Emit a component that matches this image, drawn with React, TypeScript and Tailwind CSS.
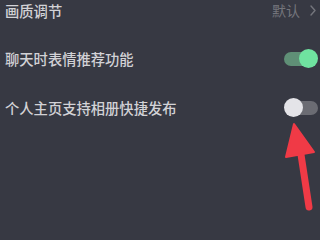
import React from 'react';

type Row = {
  label: string;
  value?: string;
  toggle?: boolean;
};

const ROWS: Row[] = [
  { label: '画质调节', value: '默认' },
  { label: '聊天时表情推荐功能', toggle: true },
  { label: '个人主页支持相册快捷发布', toggle: false },
];

function Toggle({ on }: { on: boolean }) {
  return (
    <div className="relative h-[19px] w-[34px]">
      <div
        className={[
          'absolute top-[3px] h-[14px] rounded-full',
          on ? 'left-0 w-[30px] bg-[#5f8f76]' : 'left-[6px] w-[28px] bg-[#6b6c73]',
        ].join(' ')}
      />
      <div
        className={[
          'absolute top-0 h-[19px] w-[19px] rounded-full',
          on ? 'left-[15px] bg-[#6fe3a0]' : 'left-0 bg-[#e4e4e8]',
        ].join(' ')}
      />
    </div>
  );
}

export default function App() {
  return (
    <div
      className="relative h-[240px] w-[320px] overflow-hidden bg-[#373943]"
      style={{ fontFamily: '"Noto Sans CJK SC", "Noto Sans", sans-serif' }}
    >
      <div className="-mt-[14px] flex flex-col">
        {ROWS.map((row) => (
          <div key={row.label} className="flex h-[48.5px] items-center justify-between pl-[5px] pr-[2px]">
            <span className="text-[14.3px] font-medium text-[#d2d2d6]">{row.label}</span>
            {row.value && (
              <span className="flex items-center gap-[10px] pr-[2px] text-[14px] text-[#74757c]">
                {row.value}
                <svg width="6" height="11" viewBox="0 0 6 11" fill="none">
                  <path d="M1 1l4 4.5L1 10" stroke="#74757c" strokeWidth="1.4" strokeLinecap="round" strokeLinejoin="round" />
                </svg>
              </span>
            )}
            {row.toggle !== undefined && <Toggle on={row.toggle} />}
          </div>
        ))}
      </div>

      <svg className="absolute left-0 top-0" width="320" height="240" viewBox="0 0 320 240">
        <path d="M300 148 L309 207" stroke="#f03a46" strokeWidth="7" strokeLinecap="round" />
        <path d="M294 124 L286 157 L314 152 Z" fill="#f03a46" strokeLinejoin="round" stroke="#f03a46" strokeWidth="2" />
      </svg>
    </div>
  );
}
